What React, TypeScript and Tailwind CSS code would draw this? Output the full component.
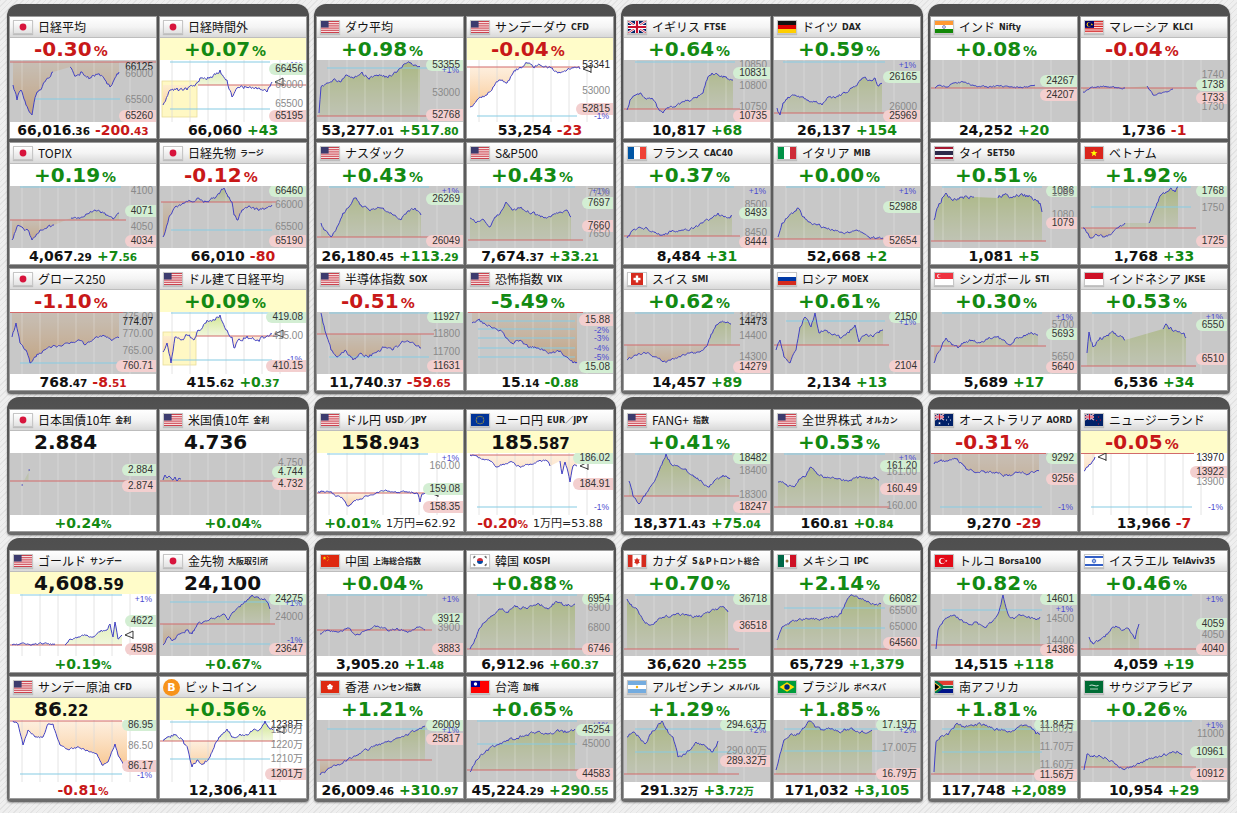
import React from "react";

type Lb = [string, number, string];
type T = {
  n: string; s?: string; f: string;
  t: string; y?: 1; b: string; inv?: 1; w?: 1;
  r: number; rx?: [number, number];
  bl?: number[]; bx?: [number, number];
  g: number[][]; lb: Lb[];
  hl?: [number, number, number, number];
  nz?: number;
};

const G: T[][] = [
  [
    { n: "日経平均", f: "jp", t: "-0.30|%", b: "66,016|.36 -200|.43", r: 2, rx: [0, 146], bl: [39], bx: [25, 110],
      g: [[3, 25, 7, 40, 11, 30, 16, 45, 22, 55, 26, 35, 30, 30, 36, 20, 43, 12], [60, 7, 66, 16, 72, 12, 80, 18, 88, 14, 95, 20, 100, 27, 104, 20, 109, 12]],
      lb: [["66125", 7, "d"], ["66000", 14, "a"], ["65500", 40, "a"], ["65260", 56, "l"]], nz: 3.5 },
    { n: "日経時間外", f: "jp", t: "+0.07|%", y: 1, w: 1, b: "66,060 +43", r: 25, rx: [38, 146], bl: [2, 49], bx: [10, 110], hl: [2, 37, 21, 57],
      g: [[3, 45, 10, 30, 17, 28, 27, 30, 37, 23, 40, 18, 50, 17, 60, 10, 67, 20, 72, 37, 77, 28, 87, 27, 97, 29, 107, 32, 112, 22]],
      lb: [["+1%", 1, "p"], ["66456", 9, "h"], ["66000", 25, "a"], ["65500", 44, "a"], ["65195", 56, "l"]], nz: 3.5 },
    { n: "TOPIX", f: "jp", t: "+0.19|%", b: "4,067|.29 +7|.56", r: 34, rx: [0, 116], bl: [1], bx: [10, 111],
      g: [[2, 54, 8, 39, 13, 42, 18, 44, 22, 54, 30, 44, 37, 42, 44, 39], [61, 32, 69, 32, 77, 28, 85, 24, 91, 27, 97, 29, 103, 33, 109, 27]],
      lb: [["4100", 1, "a"], ["4071", 25, "h"], ["4050", 41, "a"], ["4034", 55, "l"]] },
    { n: "日経先物", s: "ラージ", f: "jp", t: "-0.12|%", b: "66,010 -80", r: 16, rx: [1, 116], bl: [44], bx: [11, 112],
      g: [[3, 51, 9, 31, 15, 21, 23, 17, 30, 15, 38, 12, 46, 16, 56, 11, 64, 2, 68, 11, 72, 16, 74, 29, 78, 34, 82, 24, 88, 21, 98, 24, 106, 22, 112, 19]],
      lb: [["66460", 1, "h"], ["66000", 19, "a"], ["65500", 41, "a"], ["65190", 55, "l"]], nz: 3 },
    { n: "グロース250", f: "jp", t: "-1.10|%", b: "768|.47 -8|.51", r: 0.5, rx: [0, 116], bl: [51], bx: [10, 111],
      g: [[2, 25, 6, 11, 10, 31, 16, 38, 20, 51, 26, 45, 34, 38, 42, 35, 53, 33, 61, 30, 69, 28, 75, 33, 85, 26, 93, 23, 101, 28, 109, 26]],
      lb: [["775.00", 1, "a"], ["774.07", 10, "d"], ["770.00", 22, "a"], ["765.00", 39, "a"], ["760.71", 54, "l"]] },
    { n: "ドル建て日経平均", f: "us", t: "+0.09|%", y: 1, w: 1, b: "415|.62 +0|.37", r: 24, rx: [36, 116], bl: [1, 48], bx: [11, 112], hl: [3, 36, 20, 53],
      g: [[3, 40, 7, 31, 11, 51, 15, 25, 21, 28, 27, 23, 34, 28, 38, 18, 46, 11, 54, 8, 60, 3, 66, 18, 72, 25, 74, 36, 78, 28, 86, 26, 98, 28, 106, 25, 112, 22]],
      lb: [["419.08", 1, "h"], ["415.00", 24, "a"], ["-1%", 47, "p"], ["410.15", 54, "l"]], nz: 3.5 },
  ],
  [
    { n: "ダウ平均", f: "us", t: "+0.98|%", b: "53,277|.01 +517|.80", r: 56, rx: [0, 143], bl: [8], bx: [10, 111],
      g: [[2, 53, 4, 27, 10, 23, 16, 20, 23, 22, 30, 15, 36, 18, 45, 12, 51, 18, 60, 15, 70, 17, 80, 12, 86, 5, 93, 3, 98, 5, 103, 7]],
      lb: [["53355", 2, "h"], ["+1%", 10, "p"], ["53000", 33, "a"], ["52768", 55, "l"]] },
    { n: "サンデーダウ", s: "CFD", f: "us", t: "-0.04|%", y: 1, w: 1, b: "53,254 -23", r: 7, rx: [0, 113], bl: [56], bx: [10, 110],
      g: [[3, 47, 10, 40, 20, 35, 26, 27, 33, 20, 40, 23, 46, 13, 53, 7, 60, 3, 66, 7, 73, 5, 83, 7, 93, 13, 100, 10, 106, 8, 113, 9]],
      lb: [["53341", 2, "d"], ["53000", 31, "a"], ["52815", 49, "l"], ["-1%", 57, "p"]], nz: 3 },
    { n: "ナスダック", f: "us", t: "+0.43|%", b: "26,180|.45 +113|.29", r: 51, rx: [0, 117], bl: [1], bx: [12, 112],
      g: [[4, 37, 8, 44, 14, 51, 20, 41, 26, 27, 32, 21, 38, 12, 44, 19, 52, 24, 64, 22, 76, 29, 84, 34, 90, 26, 98, 22, 104, 29]],
      lb: [["+1%", 1, "p"], ["26269", 13, "h"], ["26049", 55, "l"]] },
    { n: "S&P500", f: "us", t: "+0.43|%", b: "7,674|.37 +33|.21", r: 54, rx: [1, 116], bl: [1], bx: [13, 108],
      g: [[3, 32, 9, 37, 17, 34, 23, 41, 29, 31, 35, 24, 39, 16, 45, 24, 53, 22, 65, 27, 77, 32, 85, 29, 93, 26, 100, 24, 104, 31]],
      lb: [["+1%", 1, "p"], ["7700", 7, "a"], ["7697", 17, "h"], ["7660", 40, "l"], ["7650", 48, "a"]] },
    { n: "半導体指数", s: "SOX", f: "us", t: "-0.51|%", b: "11,740|.37 -59|.65", r: 22, rx: [0, 117], bl: [1, 45], bx: [12, 112],
      g: [[4, 1, 6, 11, 10, 25, 14, 38, 20, 45, 28, 38, 36, 48, 44, 41, 52, 45, 60, 40, 68, 35, 76, 38, 84, 31, 92, 30, 98, 33, 104, 36]],
      lb: [["11927", 1, "h"], ["11800", 22, "a"], ["11700", 40, "a"], ["11631", 54, "l"]], nz: 3 },
    { n: "恐怖指数", s: "VIX", f: "us", inv: 1, t: "-5.49|%", b: "15|.14 -0|.88", r: 0.5, rx: [1, 116], bl: [9, 17, 26, 36, 45], bx: [11, 108],
      g: [[5, 11, 11, 8, 17, 11, 25, 16, 33, 18, 39, 26, 45, 31, 53, 28, 61, 35, 69, 36, 77, 38, 84, 41, 92, 40, 100, 45, 106, 51, 110, 50]],
      lb: [["15.88", 8, "l"], ["-2%", 18, "p"], ["-3%", 26, "p"], ["-4%", 36, "p"], ["-5%", 45, "p"], ["15.08", 55, "h"]] },
  ],
  [
    { n: "イギリス", s: "FTSE", f: "gb", t: "+0.64|%", b: "10,817 +68", r: 49, rx: [0, 116], bl: [2], bx: [11, 111],
      g: [[3, 50, 6, 40, 11, 35, 16, 33, 21, 38, 28, 38, 33, 47, 39, 53, 44, 48, 51, 47, 58, 42, 64, 40, 73, 38, 79, 33, 83, 20, 88, 13, 94, 15, 101, 17, 109, 20]],
      lb: [["10850", 2, "a"], ["10831", 13, "h"], ["10800", 26, "a"], ["10750", 47, "a"], ["10735", 56, "l"]] },
    { n: "ドイツ", s: "DAX", f: "de", t: "+0.59|%", b: "26,137 +154", r: 53, rx: [0, 111], bl: [2], bx: [9, 111],
      g: [[3, 48, 6, 55, 9, 43, 14, 37, 21, 35, 28, 37, 34, 40, 41, 42, 48, 45, 54, 37, 61, 38, 71, 33, 78, 28, 84, 23, 89, 18, 96, 20, 101, 18, 104, 26, 108, 23]],
      lb: [["+1%", 2, "p"], ["26165", 17, "h"], ["26000", 47, "a"], ["25969", 56, "l"]] },
    { n: "フランス", s: "CAC40", f: "fr", t: "+0.37|%", b: "8,484 +31", r: 50, rx: [0, 116], bl: [1], bx: [11, 110],
      g: [[3, 52, 9, 44, 15, 41, 23, 42, 31, 46, 37, 49, 47, 46, 58, 44, 70, 42, 78, 37, 88, 32, 94, 27, 100, 31, 106, 32, 108, 30]],
      lb: [["+1%", 1, "p"], ["8500", 19, "a"], ["8493", 27, "h"], ["8450", 47, "a"], ["8444", 56, "l"]] },
    { n: "イタリア", s: "MIB", f: "it", t: "+0.00|%", b: "52,668 +2", r: 53, rx: [0, 115], bl: [1], bx: [12, 111],
      g: [[4, 51, 8, 37, 14, 31, 20, 26, 24, 22, 29, 31, 35, 36, 43, 39, 51, 42, 59, 44, 67, 46, 75, 47, 83, 44, 89, 47, 95, 51, 103, 52, 109, 52]],
      lb: [["+1%", 1, "p"], ["52988", 21, "h"], ["52654", 55, "l"]] },
    { n: "スイス", s: "SMI", f: "ch", t: "+0.62|%", b: "14,457 +89", r: 33, rx: [0, 116], bl: [1], bx: [11, 110],
      g: [[3, 48, 11, 43, 21, 41, 31, 45, 39, 50, 47, 48, 56, 45, 66, 41, 76, 40, 82, 35, 86, 26, 92, 13, 96, 10, 102, 11, 107, 12]],
      lb: [["14500", 1, "a"], ["14473", 10, "d"], ["14400", 24, "a"], ["14300", 45, "a"], ["14279", 55, "l"]] },
    { n: "ロシア", s: "MOEX", f: "ru", t: "+0.61|%", b: "2,134 +13", r: 33, rx: [0, 115], bl: [9], bx: [12, 111],
      g: [[2, 38, 6, 28, 10, 45, 16, 51, 22, 38, 26, 15, 31, 5, 37, 15, 41, 1, 45, 21, 51, 18, 59, 23, 67, 26, 75, 21, 81, 13, 85, 30, 91, 23, 99, 25, 105, 21, 109, 18]],
      lb: [["2150", 1, "h"], ["+1%", 10, "p"], ["2104", 54, "l"]], nz: 3 },
  ],
  [
    { n: "インド", s: "Nifty", f: "in", t: "+0.08|%", b: "24,252 +20", r: 28, rx: [0, 146],
      g: [[4, 28, 9, 25, 16, 27, 22, 23, 32, 22, 42, 25, 56, 27, 69, 26, 79, 27, 89, 27, 99, 26, 104, 25]],
      lb: [["24267", 21, "h"], ["24207", 35, "l"]], nz: 1.6 },
    { n: "マレーシア", s: "KLCI", f: "my", t: "-0.04|%", b: "1,736 -1", r: 28, rx: [0, 146],
      g: [[2, 32, 9, 28, 16, 27, 26, 27, 36, 28, 44, 28], [66, 26, 69, 30, 72, 35, 79, 33, 86, 32, 92, 29]],
      lb: [["1740", 15, "a"], ["1738", 25, "h"], ["1733", 38, "l"], ["1730", 47, "a"]], nz: 1.6 },
    { n: "タイ", s: "SET50", f: "th", t: "+0.51|%", b: "1,081 +5", r: 55, rx: [0, 115], bl: [1], bx: [11, 111],
      g: [[3, 34, 7, 21, 11, 12, 15, 7, 21, 14, 29, 11, 37, 12, 43, 11], [67, 12, 73, 9, 81, 12, 89, 9, 97, 11, 105, 14, 109, 17, 111, 26]],
      lb: [["1086", 1, "h"], ["1085", 7, "a"], ["1080", 29, "a"], ["1079", 37, "l"]], nz: 4 },
    { n: "ベトナム", f: "vn", t: "+1.92|%", b: "1,768 +33", r: 42, rx: [0, 115], bl: [1, 21], bx: [10, 110],
      g: [[2, 42, 6, 47, 10, 52, 16, 49, 24, 51, 32, 46, 38, 41, 44, 37], [68, 37, 72, 27, 76, 17, 80, 9, 86, 6, 90, 2, 94, 6, 97, 1]],
      lb: [["1768", 1, "h"], ["1750", 22, "a"], ["1725", 55, "l"]] },
    { n: "シンガポール", s: "STI", f: "sg", t: "+0.30|%", b: "5,689 +17", r: 34, rx: [0, 115], bl: [1], bx: [11, 111],
      g: [[3, 51, 7, 41, 11, 33, 15, 26, 21, 33, 27, 36, 33, 30, 41, 28, 49, 31, 57, 27, 65, 25, 73, 28, 79, 33, 85, 26, 93, 23, 101, 21, 107, 23]],
      lb: [["+1%", 1, "p"], ["5700", 13, "a"], ["5693", 22, "h"], ["5650", 45, "a"], ["5640", 55, "l"]] },
    { n: "インドネシア", s: "JKSE", f: "id", t: "+0.53|%", b: "6,536 +34", r: 54, rx: [0, 115], bl: [1], bx: [11, 111],
      g: [[6, 41, 8, 20, 12, 35, 18, 28, 26, 23, 34, 21, 42, 25, 44, 28], [82, 17, 86, 13, 91, 18, 97, 20, 103, 21, 105, 26]],
      lb: [["+1%", 1, "p"], ["6550", 13, "h"], ["6510", 47, "l"]], nz: 3.5 },
  ],
  [
    { n: "日本国債10年", s: "金利", f: "jp", t: "2.884", b: "+0.24|%", r: 28, rx: [0, 146],
      g: [[18.5, 17, 20, 17], [11.5, 32, 13, 32]], lb: [["2.884", 17, "h"], ["2.874", 33, "l"]], nz: 0 },
    { n: "米国債10年", s: "金利", f: "us", t: "4.736", b: "+0.04|%", r: 28, rx: [0, 146],
      g: [[3, 27, 5, 22, 7, 25, 9, 23, 11, 25, 13, 27, 15, 24, 17, 28, 19, 25, 21, 26]],
      lb: [["4.750", 10, "a"], ["4.744", 19, "h"], ["4.732", 31, "l"]], nz: 1 },
  ],
  [
    { n: "ドル円", s: "USD／JPY", f: "us", t: "158|.943", y: 1, w: 1, b: "+0.01|% ~1万円=62.92", r: 40, rx: [0, 116], bl: [1], bx: [10, 111],
      g: [[1, 39, 6, 38, 13, 39, 20, 43, 26, 46, 31, 53, 36, 49, 43, 46, 50, 43, 60, 39, 70, 38, 80, 40, 90, 39, 96, 40, 101, 41, 103, 49, 105, 41, 110, 40]],
      lb: [["+1%", 1, "p"], ["160.00", 13, "a"], ["159.08", 36, "h"], ["158.35", 54, "l"]], nz: 2 },
    { n: "ユーロ円", s: "EUR／JPY", f: "eu", t: "185|.587", y: 1, w: 1, b: "-0.20|% ~1万円=53.88", r: 2, rx: [3, 110], bl: [54], bx: [10, 110],
      g: [[3, 2, 10, 3, 16, 6, 23, 8, 30, 14, 36, 11, 43, 9, 53, 14, 63, 11, 73, 7, 80, 8, 83, 13], [93, 8, 95, 21, 98, 9, 101, 19, 103, 29, 106, 13, 110, 13]],
      lb: [["186.02", 1, "h"], ["184.91", 31, "l"], ["-1%", 54, "p"]], nz: 2 },
  ],
  [
    { n: "FANG+", s: "指数", f: "us", t: "+0.41|%", b: "18,371|.43 +75|.04", r: 43, rx: [0, 115], bl: [1], bx: [11, 108],
      g: [[5, 28, 9, 43, 15, 51, 21, 43, 27, 33, 33, 23, 39, 8, 42, 1, 47, 11, 54, 13, 62, 16, 70, 24, 78, 29, 84, 34, 90, 28, 98, 24, 102, 23, 106, 26]],
      lb: [["18482", 1, "h"], ["18400", 18, "a"], ["18300", 42, "a"], ["18247", 54, "l"]] },
    { n: "全世界株式", s: "オルカン", f: "us", t: "+0.53|%", b: "160|.81 +0|.84", r: 54, rx: [0, 115], bl: [1], bx: [10, 111],
      g: [[4, 29, 12, 31, 20, 34, 26, 26, 31, 24, 37, 14, 43, 21, 51, 24, 63, 26, 75, 28, 87, 24, 95, 25, 101, 24, 105, 27]],
      lb: [["+1%", 1, "p"], ["161.20", 13, "h"], ["161.00", 19, "a"], ["160.49", 36, "l"], ["160.00", 53, "a"]] },
  ],
  [
    { n: "オーストラリア", s: "AORD", f: "au", t: "-0.31|%", b: "9,270 -29", r: 0.5, rx: [0, 115], bl: [54], bx: [9, 111],
      g: [[3, 11, 9, 8, 17, 8, 25, 6, 31, 11, 35, 16, 43, 19, 53, 18, 65, 19, 77, 23, 85, 19, 97, 21, 105, 18, 108, 18]],
      lb: [["9292", 5, "h"], ["9256", 26, "l"], ["-1%", 54, "p"]] },
    { n: "ニュージーランド", f: "nz", t: "-0.05|%", y: 1, w: 1, b: "13,966 -7", r: 0.5, rx: [0, 113], bl: [54], bx: [10, 111],
      g: [[3, 18, 6, 14, 10, 11, 14, 4]],
      lb: [["13970", 1, "d"], ["13922", 19, "l"], ["13900", 29, "a"], ["-1%", 54, "p"]] },
  ],
  [
    { n: "ゴールド", s: "サンデー", f: "us", t: "4,608|.59", y: 1, w: 1, b: "+0.19|%", r: 51, rx: [0, 112], bl: [1], bx: [10, 112],
      g: [[2, 51, 10, 50, 23, 50, 33, 50, 45, 50], [55, 51, 60, 45, 68, 43, 77, 41, 83, 43, 90, 38, 97, 36, 100, 30, 103, 43, 105, 28, 108, 45, 112, 41]],
      lb: [["+1%", 1, "p"], ["4622", 27, "h"], ["4598", 55, "l"]], nz: 2 },
    { n: "金先物", s: "大阪取引所", f: "jp", t: "24,100", b: "+0.67|%", r: 30, rx: [0, 115], bl: [8, 50], bx: [10, 110],
      g: [[3, 51, 8, 43, 13, 46, 20, 40, 27, 36, 32, 40, 37, 31, 43, 28, 50, 25, 57, 23, 63, 20, 68, 26, 73, 18, 80, 13, 87, 6, 92, 1, 97, 3, 103, 6, 107, 8, 110, 15]],
      lb: [["24275", 1, "h"], ["+1%", 9, "p"], ["24000", 23, "a"], ["-1%", 46, "p"], ["23647", 55, "l"]] },
    { n: "サンデー原油", s: "CFD", f: "us", t: "86|.22", y: 1, w: 1, b: "-0.81|%", r: 1, rx: [0, 112], bl: [54], bx: [10, 112],
      g: [[3, 1, 8, 4, 13, 25, 18, 10, 25, 17, 33, 17, 38, 4, 43, 4, 47, 17, 50, 25, 57, 29, 67, 27, 77, 30, 87, 34, 92, 45, 98, 42, 105, 24, 108, 35, 113, 44, 117, 45]],
      lb: [["86.95", 1, "h"], ["86.50", 26, "a"], ["86.17", 46, "l"], ["-1%", 55, "p"]], nz: 2 },
    { n: "ビットコイン", f: "btc", t: "+0.56|%", y: 1, w: 1, b: "12,306,411", r: 21, rx: [0, 115], bl: [2, 39], bx: [10, 110],
      g: [[3, 20, 8, 17, 15, 15, 23, 20, 28, 30, 32, 47, 37, 40, 43, 44, 50, 37, 55, 24, 60, 17, 67, 9, 73, 17, 80, 14, 87, 15, 93, 10, 100, 9, 105, 1, 108, 7, 113, 10]],
      lb: [["1238万", 1, "d"], ["1230万", 10, "a"], ["1220万", 25, "a"], ["1210万", 39, "a"], ["1201万", 54, "l"]], nz: 3 },
  ],
  [
    { n: "中国", s: "上海総合指数", f: "cn", t: "+0.04|%", b: "3,905|.20 +1|.48", r: 36, rx: [0, 115], bl: [1], bx: [10, 110],
      g: [[3, 40, 10, 36, 20, 38, 30, 34, 40, 40, 50, 36, 60, 32, 70, 36, 80, 34, 90, 38, 100, 33, 108, 36]],
      lb: [["+1%", 1, "p"], ["3912", 25, "h"], ["3900", 34, "a"], ["3883", 55, "l"]] },
    { n: "韓国", s: "KOSPI", f: "kr", t: "+0.88|%", b: "6,912|.96 +60|.37", r: 55, rx: [0, 115], bl: [1], bx: [10, 110],
      g: [[3, 55, 8, 45, 12, 35, 18, 28, 25, 22, 32, 15, 40, 18, 50, 12, 60, 15, 70, 10, 80, 14, 90, 8, 100, 12, 108, 10]],
      lb: [["6954", 1, "h"], ["6900", 14, "a"], ["6800", 34, "a"], ["6746", 55, "l"]], nz: 3 },
    { n: "香港", s: "ハンセン指数", f: "hk", t: "+1.21|%", b: "26,009|.46 +310|.97", r: 40, rx: [0, 115], bl: [9], bx: [10, 110],
      g: [[3, 55, 10, 50, 20, 45, 30, 40, 40, 35, 50, 30, 60, 25, 70, 22, 80, 18, 90, 15, 100, 10, 108, 6]],
      lb: [["26009", 1, "h"], ["+1%", 10, "p"], ["25817", 19, "l"]] },
    { n: "台湾", s: "加権", f: "tw", t: "+0.65|%", b: "45,224|.29 +290|.55", r: 50, rx: [0, 115], bl: [1, 24], bx: [10, 110],
      g: [[3, 52, 10, 40, 20, 30, 30, 25, 40, 20, 50, 18, 60, 15, 70, 12, 80, 14, 90, 10, 100, 12, 108, 9]],
      lb: [["+1%", 1, "p"], ["45254", 10, "h"], ["45000", 24, "a"], ["44583", 54, "l"]], nz: 3 },
  ],
  [
    { n: "カナダ", s: "S＆Pトロント総合", f: "ca", t: "+0.70|%", b: "36,620 +255", r: 55, rx: [0, 115], bl: [1], bx: [11, 110],
      g: [[3, 5, 7, 10, 13, 15, 19, 26, 25, 31, 31, 28, 39, 23, 51, 21, 62, 20, 74, 23, 86, 18, 94, 15, 100, 13, 104, 18]],
      lb: [["36718", 3, "h"], ["36518", 32, "l"]] },
    { n: "メキシコ", s: "IPC", f: "mx", t: "+2.14|%", b: "65,729 +1,379", r: 55, rx: [0, 115], bl: [14, 34], bx: [10, 111],
      g: [[3, 46, 8, 33, 16, 28, 24, 26, 35, 25, 47, 25, 59, 23, 67, 20, 71, 10, 77, 1, 85, 5, 95, 8, 101, 11, 107, 10]],
      lb: [["66082", 1, "h"], ["65500", 17, "a"], ["65000", 33, "a"], ["64560", 49, "l"]] },
    { n: "アルゼンチン", s: "メルバル", f: "ar", t: "+1.29|%", b: "291|.32万 +3|.72万", r: 54, rx: [0, 115], bl: [9, 32], bx: [11, 112],
      g: [[3, 17, 9, 12, 15, 17, 21, 24, 27, 14, 33, 7, 38, 1, 43, 9, 49, 17, 54, 37, 60, 34, 66, 30, 72, 22, 78, 25, 84, 29, 88, 32, 92, 27, 94, 21]],
      lb: [["294.63万", 1, "h"], ["+2%", 10, "p"], ["290.00万", 31, "a"], ["289.32万", 41, "l"]], nz: 3 },
    { n: "ブラジル", s: "ボベスパ", f: "br", t: "+1.85|%", b: "171,032 +3,105", r: 54, rx: [0, 115], bl: [9, 31], bx: [10, 111],
      g: [[2, 50, 6, 34, 10, 20, 16, 15, 24, 14, 31, 7, 35, 1, 41, 7, 49, 10, 57, 9, 65, 12, 71, 9, 79, 10, 87, 12, 95, 12, 98, 10]],
      lb: [["17.19万", 1, "h"], ["+2%", 10, "p"], ["17.00万", 28, "a"], ["16.79万", 54, "l"]] },
  ],
  [
    { n: "トルコ", s: "Borsa100", f: "tr", t: "+0.82|%", b: "14,515 +118", r: 51, rx: [0, 115], bl: [16], bx: [11, 111],
      g: [[5, 55, 7, 36, 11, 30, 17, 23, 23, 21, 29, 26, 37, 30, 45, 28, 53, 33, 61, 28, 67, 20, 72, 1, 77, 20, 83, 25, 89, 21, 97, 23, 105, 26, 109, 23]],
      lb: [["14601", 1, "h"], ["+1%", 15, "p"], ["14500", 25, "a"], ["14400", 47, "a"], ["14386", 56, "l"]] },
    { n: "イスラエル", s: "TelAviv35", f: "il", t: "+0.46|%", b: "4,059 +19", r: 55, rx: [0, 115], bl: [1], bx: [10, 111],
      g: [[8, 43, 12, 50, 18, 46, 24, 43, 30, 35, 36, 33, 42, 36, 48, 35, 54, 45, 58, 30]],
      lb: [["+1%", 1, "p"], ["4059", 30, "h"], ["4050", 41, "a"], ["4040", 55, "l"]], nz: 3 },
    { n: "南アフリカ", f: "za", t: "+1.81|%", b: "117,748 +2,089", r: 54, rx: [0, 115], bl: [9, 32], bx: [11, 111],
      g: [[3, 52, 5, 22, 9, 17, 17, 15, 25, 4, 33, 7, 41, 5, 53, 4, 65, 9, 77, 12, 85, 9, 93, 5, 101, 9, 105, 14, 109, 14]],
      lb: [["11.84万", 1, "h"], ["11.80万", 9, "a"], ["11.70万", 27, "a"], ["11.60万", 45, "a"], ["11.56万", 55, "l"]] },
    { n: "サウジアラビア", f: "sa", t: "+0.26|%", b: "10,954 +29", r: 47, rx: [0, 115], bl: [1], bx: [10, 111],
      g: [[3, 50, 6, 34, 12, 37, 18, 35, 26, 39, 34, 44, 42, 49, 50, 47, 58, 44, 66, 40, 74, 37, 82, 35, 90, 33, 97, 32, 101, 35]],
      lb: [["+1%", 1, "p"], ["11000", 14, "a"], ["10961", 32, "h"], ["10912", 54, "l"]] },
  ],
];

function rng(seed: number) {
  let a = seed >>> 0;
  return () => {
    a = (a + 0x6d2b79f5) >>> 0;
    let t = a;
    t = Math.imul(t ^ (t >>> 15), t | 1);
    t ^= t + Math.imul(t ^ (t >>> 7), t | 61);
    return ((t ^ (t >>> 14)) >>> 0) / 4294967296;
  };
}

function build(seg: number[], r: () => number, nz: number) {
  const out: [number, number][] = [];
  let j = 0;
  for (let k = 0; k + 3 < seg.length; k += 2) {
    const [x0, y0, x1, y1] = [seg[k], seg[k + 1], seg[k + 2], seg[k + 3]];
    const n = Math.max(1, Math.round((x1 - x0) / 1.1));
    for (let i = 0; i < n; i++) {
      const f = i / n;
      j = j * 0.45 + (r() - 0.5) * nz;
      const y = y0 + (y1 - y0) * f + (i === 0 ? 0 : j);
      out.push([x0 + (x1 - x0) * f, Math.min(61.5, Math.max(0.5, y))]);
    }
  }
  out.push([seg[seg.length - 2], seg[seg.length - 1]]);
  return out;
}

const pts = (p: [number, number][]) => p.map(([x, y]) => `${x.toFixed(1)},${y.toFixed(1)}`).join(" ");

function Chart({ t, id }: { t: T; id: number }) {
  const r = rng(id * 7919 + 17);
  const segs = t.g.map((s) => build(s, r, t.nz ?? 2.6));
  const all = segs.flat();
  const [rx0, rx1] = t.rx ?? [0, 117];
  const [bx0, bx1] = t.bx ?? [10, 111];
  const first = all[0];
  const last = all[all.length - 1];
  const area = `${pts(all)} ${last[0]},${t.r} ${first[0]},${t.r}`;
  const gray = !t.w;
  const tail = segs[segs.length - 1];
  const end = tail[tail.length - 1];
  return (
    <div className="relative h-[62px] overflow-hidden">
      <svg className="absolute inset-0" width="146" height="62" viewBox="0 0 146 62">
        <defs>
          <linearGradient id={`gu${id}`} x1="0" y1="0" x2="0" y2={t.r} gradientUnits="userSpaceOnUse">
            <stop offset="0" stopColor="#c2dd6e" stopOpacity="0.85" />
            <stop offset="1" stopColor="#e6f1c4" stopOpacity="0.6" />
          </linearGradient>
          <linearGradient id={`gd${id}`} x1="0" y1={t.r} x2="0" y2="62" gradientUnits="userSpaceOnUse">
            <stop offset="0" stopColor="#fde8d0" stopOpacity="0.7" />
            <stop offset="1" stopColor="#f5b26a" stopOpacity="0.95" />
          </linearGradient>
          <clipPath id={`cu${id}`}><rect x="0" y="0" width="146" height={t.r} /></clipPath>
          <clipPath id={`cd${id}`}><rect x="0" y={t.r} width="146" height={62 - t.r} /></clipPath>
        </defs>
        {t.hl && (
          <rect x={t.hl[0]} y={t.hl[2]} width={t.hl[1] - t.hl[0]} height={t.hl[3] - t.hl[2]} fill="#fff8c4" stroke="#e9dc9a" strokeWidth="0.8" />
        )}
        <polygon points={area} fill={`url(#gu${id})`} clipPath={`url(#cu${id})`} />
        <polygon points={area} fill={`url(#gd${id})`} clipPath={`url(#cd${id})`} />
        {gray && <rect x="0" y="0" width="146" height="62" fill="#7c7c7c" fillOpacity="0.42" />}
        {[0, 1, 2, 3, 4, 5, 6].map((i) => (
          <line key={i} x1={12 + i * 18} y1="0" x2={12 + i * 18} y2="62" stroke={gray ? "#ffffff" : "#d9d9d9"} strokeOpacity={gray ? 0.28 : 0.7} strokeWidth="1" />
        ))}
        <line x1={rx0} y1={t.r} x2={rx1} y2={t.r} stroke="#d26a6a" strokeWidth="1.2" />
        {(t.bl ?? []).map((y, i) => (
          <line key={i} x1={bx0} y1={y} x2={bx1} y2={y} stroke="#86cbe3" strokeWidth="1.1" />
        ))}
        {segs.map((s, i) => (
          <polyline key={i} points={pts(s)} fill="none" stroke="#4242c4" strokeWidth="1" strokeLinejoin="round" />
        ))}
        {t.w && t.nz !== 0 && (
          <path d={`M${end[0] + 11},${end[1] - 4} L${end[0] + 3},${end[1]} L${end[0] + 11},${end[1] + 3} M${end[0] + 11},${end[1] - 4} L${end[0] + 11},${end[1] + 4}`} fill="none" stroke="#222" strokeWidth="0.9" />
        )}
      </svg>
      {t.lb.map(([s, y, k], i) => {
        const top = Math.min(Math.max(y - 6, -1), 50);
        const cls =
          k === "h"
            ? "right-0 pl-[6px] pr-[3px] rounded-l-full bg-[#d3eed3] text-[#333] text-[10px]"
            : k === "l"
            ? "right-0 pl-[6px] pr-[3px] rounded-l-full bg-[#f3cfcf] text-[#333] text-[10px]"
            : k === "p"
            ? "right-[4px] text-[#4b4bd0] text-[8.5px]"
            : k === "d"
            ? "right-[3px] text-[#222] text-[10px]"
            : "right-[3px] text-[#8a8a8a] text-[10px]";
        return (
          <span key={i} className={`absolute h-[12px] leading-[12px] font-['Liberation_Sans','Noto_Sans_CJK_JP',sans-serif] ${cls}`} style={{ top }}>
            {s}
          </span>
        );
      })}
    </div>
  );
}

function Txt({ s, inv, top }: { s: string; inv?: 1; top?: boolean }) {
  return (
    <>
      {s.split(" ").map((p, i) => {
        if (p.startsWith("~"))
          return (
            <span key={i} className="ml-[5px] text-[11px] font-normal text-[#222]">{p.slice(1)}</span>
          );
        const [a, b] = p.split("|");
        const pos = a[0] === "+";
        const neg = a[0] === "-";
        const c = pos ? (inv ? "text-[#c81818]" : "text-[#138a13]") : neg ? (inv ? "text-[#138a13]" : "text-[#c81818]") : "text-[#111]";
        const big = top ? "text-[20px]" : "text-[14px]";
        const sm = top ? (b === "%" ? "text-[14px] ml-[2px]" : "text-[15px]") : "text-[10.5px]";
        return (
          <span key={i} className={`${c} ${i ? "ml-[5px]" : ""}`}>
            <span className={big}>{a}</span>
            {b && <span className={sm}>{b}</span>}
          </span>
        );
      })}
    </>
  );
}

function Flag({ c }: { c: string }) {
  if (c === "btc")
    return (
      <div className="ml-[3px] w-[17px] h-[17px] rounded-full bg-[#f7931a] flex items-center justify-center text-white text-[11px] font-bold font-['DejaVu_Sans',sans-serif] leading-none">
        B
      </div>
    );
  const uj = (
    <>
      <rect width="18" height="12" fill="#012169" />
      <path d="M0,0 L18,12 M18,0 L0,12" stroke="#fff" strokeWidth="2.4" />
      <path d="M0,0 L18,12 M18,0 L0,12" stroke="#c8102e" strokeWidth="0.8" />
      <path d="M9,0 V12 M0,6 H18" stroke="#fff" strokeWidth="4" />
      <path d="M9,0 V12 M0,6 H18" stroke="#c8102e" strokeWidth="2.2" />
    </>
  );
  const h3 = (a: string, b: string, d: string) => (
    <>
      <rect width="18" height="4" fill={a} />
      <rect y="4" width="18" height="4" fill={b} />
      <rect y="8" width="18" height="4" fill={d} />
    </>
  );
  const v3 = (a: string, b: string, d: string) => (
    <>
      <rect width="6" height="12" fill={a} />
      <rect x="6" width="6" height="12" fill={b} />
      <rect x="12" width="6" height="12" fill={d} />
    </>
  );
  const star = (cx: number, cy: number, r: number, fill: string) => {
    const p: string[] = [];
    for (let i = 0; i < 10; i++) {
      const a = -Math.PI / 2 + (i * Math.PI) / 5;
      const rr = i % 2 ? r * 0.42 : r;
      p.push(`${(cx + rr * Math.cos(a)).toFixed(2)},${(cy + rr * Math.sin(a)).toFixed(2)}`);
    }
    return <polygon points={p.join(" ")} fill={fill} />;
  };
  let body: React.ReactNode = null;
  switch (c) {
    case "jp":
      body = <circle cx="9" cy="6" r="3.4" fill="#d7143c" />;
      break;
    case "us":
      body = (
        <>
          <rect width="18" height="12" fill="#fff" />
          {[0, 2, 4, 6, 8, 10, 12].map((i) => (
            <rect key={i} y={(i * 12) / 13} width="18" height={12 / 13} fill="#c8313e" />
          ))}
          <rect width="7.6" height="6.5" fill="#3c3b6e" />
        </>
      );
      break;
    case "gb":
      body = uj;
      break;
    case "au":
    case "nz":
      body = (
        <>
          <rect width="18" height="12" fill="#012169" />
          <g transform="scale(0.5)">{uj}</g>
          {c === "au" ? (
            <>
              {star(4.5, 9.3, 1.5, "#fff")}
              {star(13.5, 3, 0.9, "#fff")}
              {star(15.5, 6, 0.9, "#fff")}
              {star(13.5, 10, 0.9, "#fff")}
              {star(11.5, 6, 0.9, "#fff")}
            </>
          ) : (
            <>
              {star(13.5, 3, 1, "#c8102e")}
              {star(15.5, 6, 1, "#c8102e")}
              {star(13.5, 10, 1, "#c8102e")}
              {star(11.5, 6.5, 1, "#c8102e")}
            </>
          )}
        </>
      );
      break;
    case "de":
      body = h3("#111", "#dd0000", "#ffce00");
      break;
    case "ru":
      body = h3("#fff", "#0039a6", "#d52b1e");
      break;
    case "in":
      body = (
        <>
          {h3("#ff9933", "#fff", "#138808")}
          <circle cx="9" cy="6" r="1.4" fill="none" stroke="#000080" strokeWidth="0.5" />
        </>
      );
      break;
    case "fr":
      body = v3("#0055a4", "#fff", "#ef4135");
      break;
    case "it":
      body = v3("#009246", "#fff", "#ce2b37");
      break;
    case "mx":
      body = (
        <>
          {v3("#006847", "#fff", "#ce1126")}
          <circle cx="9" cy="6" r="1.5" fill="#8c6a2f" />
        </>
      );
      break;
    case "ca":
      body = (
        <>
          <rect width="18" height="12" fill="#fff" />
          <rect width="4.5" height="12" fill="#d52b1e" />
          <rect x="13.5" width="4.5" height="12" fill="#d52b1e" />
          <path d="M9,2.5 L10,4.5 L11.5,4 L11,7 L12,7.5 L9.3,9 L9.3,10.5 L8.7,10.5 L8.7,9 L6,7.5 L7,7 L6.5,4 L8,4.5 Z" fill="#d52b1e" />
        </>
      );
      break;
    case "ch":
      body = (
        <>
          <rect width="18" height="12" fill="#fff" />
          <rect x="3" width="12" height="12" fill="#d52b1e" />
          <rect x="7.8" y="2.5" width="2.4" height="7" fill="#fff" />
          <rect x="5.5" y="4.8" width="7" height="2.4" fill="#fff" />
        </>
      );
      break;
    case "my":
      body = (
        <>
          <rect width="18" height="12" fill="#fff" />
          {[0, 2, 4, 6, 8, 10, 12].map((i) => (
            <rect key={i} y={(i * 12) / 14} width="18" height={12 / 14} fill="#cc0001" />
          ))}
          <rect width="9" height="6.9" fill="#010066" />
          <circle cx="3.8" cy="3.4" r="2.2" fill="#fc0" />
          <circle cx="4.5" cy="3.4" r="1.8" fill="#010066" />
          {star(6.8, 3.4, 1.3, "#fc0")}
        </>
      );
      break;
    case "th":
      body = (
        <>
          <rect width="18" height="12" fill="#a51931" />
          <rect y="2" width="18" height="8" fill="#f4f5f8" />
          <rect y="4" width="18" height="4" fill="#2d2a4a" />
        </>
      );
      break;
    case "vn":
      body = (
        <>
          <rect width="18" height="12" fill="#da251d" />
          {star(9, 6.3, 3.6, "#ff0")}
        </>
      );
      break;
    case "sg":
      body = (
        <>
          <rect width="18" height="12" fill="#fff" />
          <rect width="18" height="6" fill="#ef3340" />
          <circle cx="4" cy="3" r="1.9" fill="#fff" />
          <circle cx="4.8" cy="3" r="1.7" fill="#ef3340" />
        </>
      );
      break;
    case "id":
      body = (
        <>
          <rect width="18" height="12" fill="#fff" />
          <rect width="18" height="6" fill="#ce1126" />
        </>
      );
      break;
    case "eu":
      body = (
        <>
          <rect width="18" height="12" fill="#003399" />
          {Array.from({ length: 12 }, (_, i) => (
            <circle key={i} cx={9 + 3.8 * Math.cos((i * Math.PI) / 6)} cy={6 + 3.8 * Math.sin((i * Math.PI) / 6)} r="0.55" fill="#fc0" />
          ))}
        </>
      );
      break;
    case "cn":
      body = (
        <>
          <rect width="18" height="12" fill="#de2910" />
          {star(3.5, 3.2, 2, "#ffde00")}
          {star(6.6, 1.4, 0.6, "#ffde00")}
          {star(7.6, 2.8, 0.6, "#ffde00")}
          {star(7.6, 4.6, 0.6, "#ffde00")}
          {star(6.6, 5.8, 0.6, "#ffde00")}
        </>
      );
      break;
    case "kr":
      body = (
        <>
          <rect width="18" height="12" fill="#fff" />
          <path d="M6,6 A3,3 0 0 1 12,6 Z" fill="#cd2e3a" />
          <path d="M6,6 A3,3 0 0 0 12,6 Z" fill="#0047a0" />
          <path d="M2,2.5 L4,1 M2.5,3.2 L4.5,1.7 M14,1 L16,2.5 M13.5,1.7 L15.5,3.2 M2,9.5 L4,11 M2.5,8.8 L4.5,10.3 M14,11 L16,9.5 M13.5,10.3 L15.5,8.8" stroke="#000" strokeWidth="0.6" />
        </>
      );
      break;
    case "hk":
      body = (
        <>
          <rect width="18" height="12" fill="#de2910" />
          {[0, 1, 2, 3, 4].map((i) => (
            <ellipse key={i} cx={9 + 1.6 * Math.cos(-Math.PI / 2 + (i * 2 * Math.PI) / 5)} cy={6 + 1.6 * Math.sin(-Math.PI / 2 + (i * 2 * Math.PI) / 5)} rx="1.3" ry="1.3" fill="#fff" />
          ))}
        </>
      );
      break;
    case "tw":
      body = (
        <>
          <rect width="18" height="12" fill="#fe0000" />
          <rect width="9" height="6" fill="#000095" />
          <circle cx="4.5" cy="3" r="1.7" fill="#fff" />
        </>
      );
      break;
    case "ar":
      body = (
        <>
          {h3("#74acdf", "#fff", "#74acdf")}
          <circle cx="9" cy="6" r="1.2" fill="#f6b40e" />
        </>
      );
      break;
    case "br":
      body = (
        <>
          <rect width="18" height="12" fill="#009c3b" />
          <polygon points="9,1.3 16.5,6 9,10.7 1.5,6" fill="#ffdf00" />
          <circle cx="9" cy="6" r="2.7" fill="#002776" />
        </>
      );
      break;
    case "tr":
      body = (
        <>
          <rect width="18" height="12" fill="#e30a17" />
          <circle cx="7" cy="6" r="3" fill="#fff" />
          <circle cx="7.8" cy="6" r="2.4" fill="#e30a17" />
          {star(11.2, 6, 1.3, "#fff")}
        </>
      );
      break;
    case "il":
      body = (
        <>
          <rect width="18" height="12" fill="#fff" />
          <rect y="1.2" width="18" height="1.6" fill="#0038b8" />
          <rect y="9.2" width="18" height="1.6" fill="#0038b8" />
          <polygon points="9,3.6 11,7.1 7,7.1" fill="none" stroke="#0038b8" strokeWidth="0.5" />
          <polygon points="9,8.4 11,4.9 7,4.9" fill="none" stroke="#0038b8" strokeWidth="0.5" />
        </>
      );
      break;
    case "za":
      body = (
        <>
          <rect width="18" height="12" fill="#fff" />
          <rect width="18" height="4" fill="#e03c31" />
          <rect y="8" width="18" height="4" fill="#001489" />
          <path d="M0,0 L8,6 L0,12 Z" fill="#fff" />
          <path d="M0,0 L8,6 H18 M0,12 L8,6" stroke="#007749" strokeWidth="2.6" fill="none" />
          <path d="M0,1.8 L5.6,6 L0,10.2 Z" fill="#ffb612" />
          <path d="M0,2.8 L4.3,6 L0,9.2 Z" fill="#000" />
        </>
      );
      break;
    case "sa":
      body = (
        <>
          <rect width="18" height="12" fill="#006c35" />
          <path d="M4.5,4.5 Q7,3.5 9,4.5 T13.5,4.5" stroke="#fff" strokeWidth="0.8" fill="none" />
          <path d="M5,8 H13" stroke="#fff" strokeWidth="0.7" />
        </>
      );
      break;
  }
  return (
    <div className="ml-[3px] shrink-0 w-[20px] h-[14px] flex items-center justify-center border border-[#c6c6c6] bg-linear-to-b from-white to-[#e2e2e2] shadow-[0_1px_1px_rgba(0,0,0,0.15)]">
      <svg width="18" height="12" viewBox="0 0 18 12">{body}</svg>
    </div>
  );
}

function Tile({ t, id }: { t: T; id: number }) {
  return (
    <div className="h-[123px] bg-white border border-[#9c9c9c] flex flex-col overflow-hidden">
      <div className="h-[21px] shrink-0 flex items-center bg-linear-to-b from-white via-[#f4f4f4] to-[#d9d9d9] border-b border-[#bdbdbd] whitespace-nowrap overflow-hidden">
        <Flag c={t.f} />
        <span className="ml-[5px] text-[12px] leading-none text-[#111] font-['Noto_Sans_CJK_JP',sans-serif]">{t.n}</span>
        {t.s && (
          <span className="ml-[4px] mt-[2px] text-[8px] leading-none font-bold text-[#222] font-['DejaVu_Sans','Noto_Sans_CJK_JP',sans-serif]">{t.s}</span>
        )}
      </div>
      <div className={`h-[22px] shrink-0 pl-[24px] leading-[22px] whitespace-nowrap font-bold font-['DejaVu_Sans','Noto_Sans_CJK_JP',sans-serif] ${t.y ? "bg-[#fffcc9]" : "bg-white"}`}>
        <Txt s={t.t} inv={t.inv} top />
      </div>
      <Chart t={t} id={id} />
      <div className="h-[16px] shrink-0 flex items-center justify-center leading-[15px] whitespace-nowrap font-bold font-['DejaVu_Sans','Noto_Sans_CJK_JP',sans-serif]">
        <Txt s={t.b} inv={t.inv} />
      </div>
    </div>
  );
}

export default function App() {
  let k = 0;
  return (
    <div className="w-[1237px] h-[813px] overflow-hidden bg-[repeating-linear-gradient(135deg,#e3e3e3_0px,#e3e3e3_1px,#efefef_1px,#efefef_4px)] pl-[7px] pt-[4px]">
      <div className="grid grid-cols-[repeat(4,302px)] gap-x-[5px] gap-y-[3px]">
        {G.map((grp, gi) => (
          <div key={gi} className="rounded-t-[12px] rounded-b-[4px] bg-linear-to-b from-[#4f4f4f] to-[#6c6c6c] px-[2px] pt-[12px] pb-[3px] shadow-[0_1px_2px_rgba(0,0,0,0.35)]">
            <div className="grid grid-cols-2 gap-x-[2px] gap-y-[3px]">
              {grp.map((t) => {
                k += 1;
                return <Tile key={k} t={t} id={k} />;
              })}
            </div>
          </div>
        ))}
      </div>
    </div>
  );
}
